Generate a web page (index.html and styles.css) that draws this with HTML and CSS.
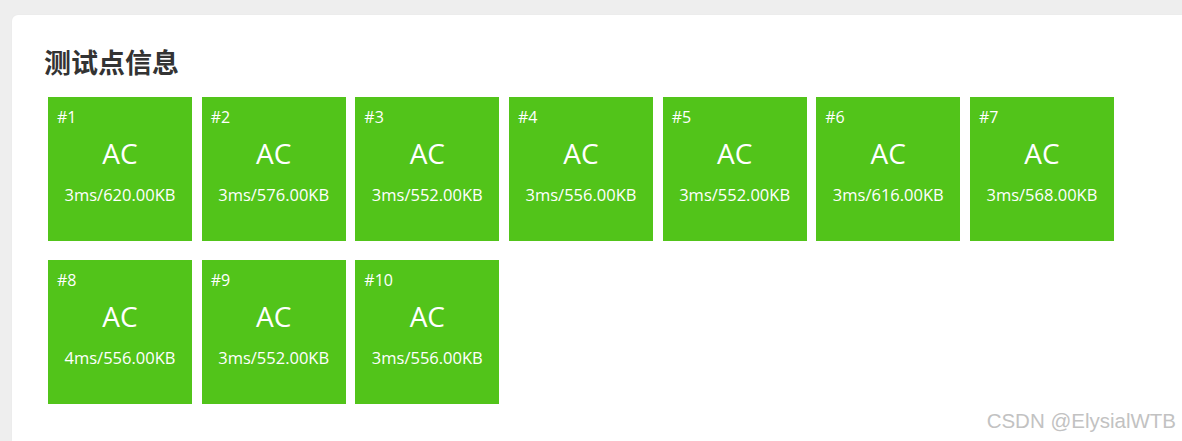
FILE: index.html
```html
<!DOCTYPE html>
<html lang="zh">
<head>
<meta charset="utf-8">
<title>测试点信息</title>
<link rel="stylesheet" href="styles.css">
</head>
<body>
<div class="page">
  <section class="card">
    <h2 class="title">测试点信息</h2>
    <div class="cases">
      <div class="case"><div class="case-id">#1</div><div class="case-status">AC</div><div class="case-usage">3ms/620.00KB</div></div>
      <div class="case"><div class="case-id">#2</div><div class="case-status">AC</div><div class="case-usage">3ms/576.00KB</div></div>
      <div class="case"><div class="case-id">#3</div><div class="case-status">AC</div><div class="case-usage">3ms/552.00KB</div></div>
      <div class="case"><div class="case-id">#4</div><div class="case-status">AC</div><div class="case-usage">3ms/556.00KB</div></div>
      <div class="case"><div class="case-id">#5</div><div class="case-status">AC</div><div class="case-usage">3ms/552.00KB</div></div>
      <div class="case"><div class="case-id">#6</div><div class="case-status">AC</div><div class="case-usage">3ms/616.00KB</div></div>
      <div class="case"><div class="case-id">#7</div><div class="case-status">AC</div><div class="case-usage">3ms/568.00KB</div></div>
      <div class="case"><div class="case-id">#8</div><div class="case-status">AC</div><div class="case-usage">4ms/556.00KB</div></div>
      <div class="case"><div class="case-id">#9</div><div class="case-status">AC</div><div class="case-usage">3ms/552.00KB</div></div>
      <div class="case"><div class="case-id">#10</div><div class="case-status">AC</div><div class="case-usage">3ms/556.00KB</div></div>
    </div>
  </section>
  <div class="watermark">CSDN @ElysialWTB</div>
</div>
</body>
</html>
```

FILE: styles.css
```css
html, body {
  margin: 0;
  padding: 0;
  height: 100%;
  overflow: hidden;
  background: #eeeeee;
}

.page {
  position: relative;
  height: 100%;
  padding: 15px 0 0 12px;
  box-sizing: border-box;
}

.card {
  background: #ffffff;
  border-radius: 6px 0 0 0;
  width: 1170px;
  height: 426px;
  padding: 27px 0 0 32px;
  box-sizing: border-box;
  box-shadow: 0 0 2px rgba(0, 0, 0, 0.04);
}

.title {
  margin: 0;
  font-family: "Noto Sans CJK SC", "Noto Sans", sans-serif;
  font-size: 27px;
  line-height: 39px;
  font-weight: 700;
  color: #333333;
}

.cases {
  display: flex;
  flex-wrap: wrap;
  column-gap: 9.67px;
  row-gap: 19px;
  width: 1080px;
  margin: 16px 0 0 4px;
}

.case {
  width: 144px;
  height: 144px;
  background: #52c41a;
  color: #ffffff;
  font-family: "Open Sans", sans-serif;
  box-sizing: border-box;
  padding-top: 9px;
}

.case-id {
  font-size: 16px;
  line-height: 22px;
  padding-left: 9px;
}

.case-status {
  margin-top: 6px;
  text-align: center;
  font-size: 28px;
  line-height: 38px;
}

.case-usage {
  margin-top: 12px;
  text-align: center;
  font-size: 16.5px;
  line-height: 22px;
}

.watermark {
  position: absolute;
  right: 6px;
  bottom: 9px;
  font-family: "Liberation Sans", Arial, sans-serif;
  font-size: 20.5px;
  line-height: 22px;
  color: #c2c2c2;
  text-shadow: 0 0 1px rgba(255, 255, 255, 0.8);
}
```
